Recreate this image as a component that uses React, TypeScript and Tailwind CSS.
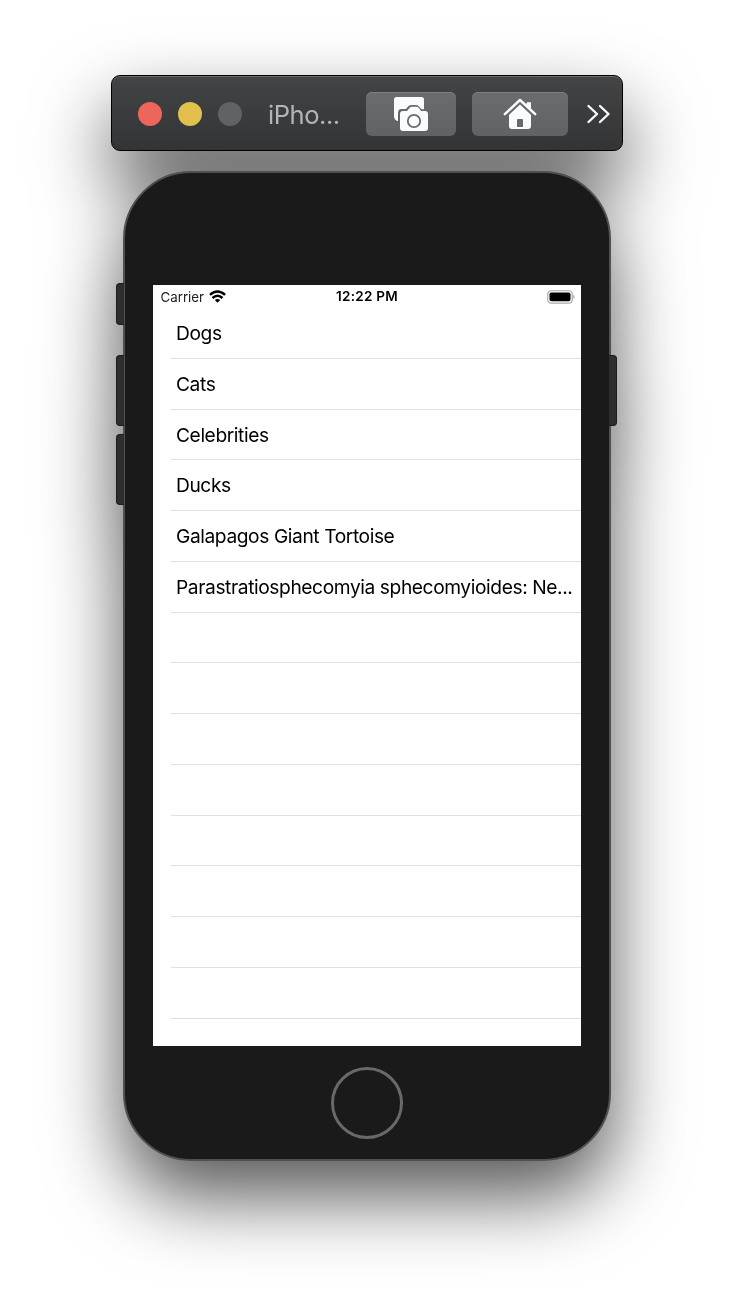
const rows = [
  "Dogs",
  "Cats",
  "Celebrities",
  "Ducks",
  "Galapagos Giant Tortoise",
  "Parastratiosphecomyia sphecomyioides: Ne...",
  "", "", "", "", "", "", "", "",
];

const sideButton =
  "absolute w-[8px] bg-[#2e2e2e] border-y border-[#1c1c1c]";

function CameraIcon() {
  return (
    <svg width="36" height="36" viewBox="0 0 36 36">
      <path
        fill="#fafbfc"
        d="M3.500 1H28.500A2.500 2.500 0 0 1 31 3.500V13.300H28.500L26 10.500Q25 9 23 9H18Q16 9 15 10.500L13 13H8.500Q5 13 5 17V25H4.500Q1 24 1 20V3.500Q1 1 3.500 1Z"
      />
      <path
        fill="#fafbfc"
        d="M10 15H14L16.500 12Q17.500 10.700 19 10.700H23Q25 10.700 26 12L28 15H32Q35 15 35 18V32Q35 35 32 35H10Q7 35 7 32V18Q7 15 10 15Z"
      />
      <circle cx="21" cy="25" r="6.200" fill="#fafbfc" stroke="#67696b" strokeWidth="1.800" />
    </svg>
  );
}

function HomeIcon() {
  return (
    <svg width="34" height="32" viewBox="0 0 34 32">
      <path d="M23.500 9V5Q23.500 4.300 24.200 4.300H27.300Q28 4.300 28 5V13Z" fill="#fafbfc" />
      <path
        d="M17 6L28 16.500V28Q28 31 25 31H9Q6 31 6 28V16.500Z"
        fill="#fafbfc"
      />
      <path d="M4 17.400L17 5L30 17.400" fill="none" stroke="#67696b" strokeWidth="2" />
      <path d="M1.800 16.200L17 2L32.200 16.200" fill="none" stroke="#fafbfc" strokeWidth="2.500" strokeLinecap="round" strokeLinejoin="round" />
      <path d="M14 29V22Q14 21 15 21H19Q20 21 20 22V29Z" fill="#67696b" />
    </svg>
  );
}

function WifiIcon() {
  return (
    <svg width="17" height="13" viewBox="0 0 17 13" fill="none" stroke="black" strokeWidth="2.500">
      <path d="M0.900 4.900Q8.500 -1.900 16.100 4.900" />
      <path d="M3.500 8Q8.500 3.600 13.500 8" />
      <path d="M8.500 12.800L5.800 10.100Q8.500 7.800 11.200 10.100Z" fill="black" stroke="none" />
    </svg>
  );
}

function BatteryIcon() {
  return (
    <svg width="28" height="14" viewBox="0 0 28 14">
      <rect x="0.750" y="0.750" width="24.500" height="12.300" rx="3.400" fill="white" stroke="#ababab" strokeWidth="1.200" />
      <rect x="2.500" y="2.500" width="21" height="8.800" rx="1.800" fill="black" />
      <path d="M26.300 4.800Q27.700 5.300 27.700 6.900T26.300 9Z" fill="#ababab" />
    </svg>
  );
}

function Toolbar() {
  return (
    <header className="flex h-[76px] w-[512px] items-center rounded-[9px] border border-black bg-linear-to-b from-[#424446] to-[#333436] pl-[26px] pt-[2px] shadow-[inset_0_1px_0_#6a6c6e]">
      <div className="flex gap-4">
        <span className="size-6 rounded-full bg-[#ee665b]" />
        <span className="size-6 rounded-full bg-[#e1c04d]" />
        <span className="size-6 rounded-full bg-[#606263]" />
      </div>
      <h1 className="ml-[26px] w-[98px] pt-[2px] text-[25.500px] leading-8 tracking-[-0.450px] text-[#b4b5b6]">iPho...</h1>
      <button className="flex h-11 w-[90px] items-center justify-center rounded-md bg-linear-to-b from-[#6a6c6e] to-[#606264] shadow-[inset_0_1px_0_#7c7e80]">
        <CameraIcon />
      </button>
      <button className="ml-4 flex h-11 w-24 items-center justify-center rounded-md bg-linear-to-b from-[#6a6c6e] to-[#606264] shadow-[inset_0_1px_0_#7c7e80]">
        <HomeIcon />
      </button>
      <svg className="ml-[18px]" width="26" height="22" viewBox="0 0 26 22" fill="none" stroke="#fafbfc" strokeWidth="2.400" strokeLinecap="round" strokeLinejoin="round">
        <path d="M2.500 3L11 11L2.500 19M14 3L22.500 11L14 19" />
      </svg>
    </header>
  );
}

function Screen() {
  return (
    <main className="relative mt-[112px] h-[761px] w-[428px] overflow-hidden bg-white text-black">
      <div className="grid h-[23px] grid-cols-[1fr_auto_1fr] items-center pl-[7px] pr-[6px]">
        <div className="flex items-center gap-[5px] pl-[0.500px] text-[13.300px] text-[#222]">
          <span className="pt-[2px]">Carrier</span>
          <WifiIcon />
        </div>
        <div className="pr-px text-center text-[13.500px] font-semibold tracking-[0.250px]">12:22 PM</div>
        <div className="flex justify-end">
          <BatteryIcon />
        </div>
      </div>
      <ul>
        {rows.map((label, i) => (
          <li
            key={i}
            className="ml-[18px] flex h-[50.770px] items-center whitespace-nowrap border-b border-[#e1e1e2] pl-[5px] pt-px text-[19.200px] tracking-[-0.410px]"
          >
            {label}
          </li>
        ))}
      </ul>
    </main>
  );
}

export default function App() {
  return (
    <div className="h-[1310px] w-[734px] overflow-hidden bg-white font-['Inter',sans-serif]">
      <div className="flex h-full flex-col items-center pt-[75px] [filter:drop-shadow(0_36px_38px_rgba(0,0,0,0.66))]">
        <Toolbar />
        <section className="relative mt-5 flex h-[990px] w-[488px] flex-col items-center rounded-[68px] border-2 border-[#505050] bg-[#1a1a1a]">
          <span className={`${sideButton} -left-[9px] top-[110px] h-[42px] rounded-l-[4px] border-l`} />
          <span className={`${sideButton} -left-[9px] top-[182px] h-[71px] rounded-l-[4px] border-l`} />
          <span className={`${sideButton} -left-[9px] top-[261px] h-[71px] rounded-l-[4px] border-l`} />
          <span className={`${sideButton} -right-[8px] top-[182px] h-[71px] rounded-r-[4px] border-r`} />
          <Screen />
          <button aria-label="Home" className="mt-[21px] size-[72px] rounded-full border-[3px] border-[#696969]" />
        </section>
      </div>
    </div>
  );
}
